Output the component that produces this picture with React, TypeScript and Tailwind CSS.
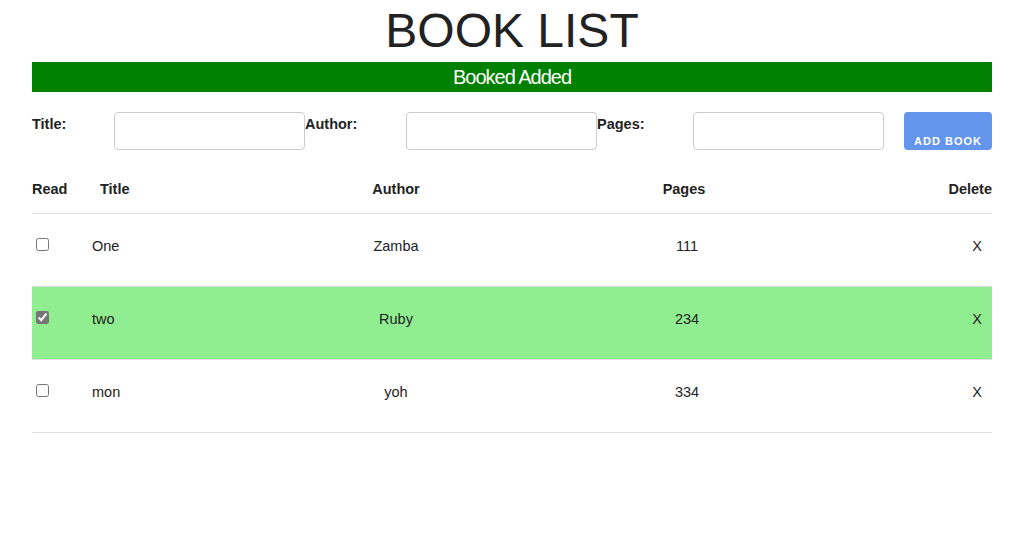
import { useState } from 'react'

type Book = {
  id: number
  title: string
  author: string
  pages: string
  read: boolean
}

const initialBooks: Book[] = [
  { id: 1, title: 'One', author: 'Zamba', pages: '111', read: false },
  { id: 2, title: 'two', author: 'Ruby', pages: '234', read: true },
  { id: 3, title: 'mon', author: 'yoh', pages: '334', read: false },
]

const cols = 'grid grid-cols-[60px_200px_208px_368px_124px]'

export default function App() {
  const [books, setBooks] = useState<Book[]>(initialBooks)
  const [title, setTitle] = useState('')
  const [author, setAuthor] = useState('')
  const [pages, setPages] = useState('')

  function addBook() {
    if (!title.trim()) return
    setBooks([...books, { id: Date.now(), title, author, pages, read: false }])
    setTitle('')
    setAuthor('')
    setPages('')
  }

  function toggle(id: number) {
    setBooks(books.map((b) => (b.id === id ? { ...b, read: !b.read } : b)))
  }

  return (
    <div className="min-h-screen bg-white font-['Liberation_Sans',Arial,sans-serif] text-[#222]">
      <div className="ml-[32px] w-[960px]">
        <h1 className="h-[62px] text-center text-[48px] leading-[62px] font-normal">BOOK LIST</h1>
        <div className="h-[30px] bg-[#008000] text-center text-[20px] leading-[30px] tracking-[-1px] text-white">
          Booked Added
        </div>

        <div className="mt-[20px] flex items-start">
          <label className="w-[82px] pt-[2px] text-[14.5px] font-bold">Title:</label>
          <input
            value={title}
            onChange={(e) => setTitle(e.target.value)}
            className="h-[38px] w-[191px] rounded-[4px] border border-[#ccc] px-2"
          />
          <label className="w-[101px] pt-[2px] text-[14.5px] font-bold">Author:</label>
          <input
            value={author}
            onChange={(e) => setAuthor(e.target.value)}
            className="h-[38px] w-[191px] rounded-[4px] border border-[#ccc] px-2"
          />
          <label className="w-[96px] pt-[2px] text-[14.5px] font-bold">Pages:</label>
          <input
            value={pages}
            onChange={(e) => setPages(e.target.value)}
            className="h-[38px] w-[191px] rounded-[4px] border border-[#ccc] px-2"
          />
          <button
            type="button"
            onClick={addBook}
            className="ml-[20px] flex h-[38px] flex-1 items-end justify-center rounded-[4px] bg-[#6495ed] pb-[1px] text-[11px] font-bold tracking-[1px] text-white"
          >
            ADD BOOK
          </button>
        </div>

        <div className={`${cols} mt-[16px] h-[48px] items-center border-b border-[#ddd] text-[14.5px] font-bold`}>
          <div>Read</div>
          <div className="pl-[8px]">Title</div>
          <div className="text-center">Author</div>
          <div className="text-center">Pages</div>
          <div className="text-right">Delete</div>
        </div>

        {books.map((b) => (
          <div
            key={b.id}
            className={`${cols} h-[73px] border-b border-[#ddd] pt-[22px] text-[14.5px] ${b.read ? 'bg-[#90ee90]' : 'bg-white'}`}
          >
            <div>
              <input
                type="checkbox"
                checked={b.read}
                onChange={() => toggle(b.id)}
                className="mt-[2px] ml-[4px] block h-[13px] w-[13px] accent-[#767676]"
              />
            </div>
            <div>{b.title}</div>
            <div className="text-center">{b.author}</div>
            <div className="pl-[6px] text-center">{b.pages}</div>
            <div className="pr-[10px] text-right">
              <button type="button" onClick={() => setBooks(books.filter((x) => x.id !== b.id))}>
                X
              </button>
            </div>
          </div>
        ))}
      </div>
    </div>
  )
}
